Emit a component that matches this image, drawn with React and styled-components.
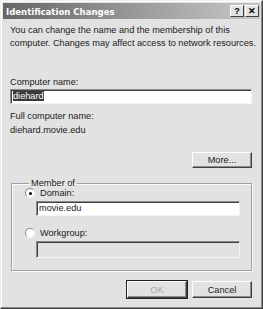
import React from "react";
import styled, { createGlobalStyle } from "styled-components";

const Global = createGlobalStyle`
  html, body { margin: 0; padding: 0; background: #e2e2e2; }
  body { font-family: "Liberation Sans", Arial, sans-serif; font-size: 9.2px; color: #1a1a1a; }
`;

const Window = styled.div`
  width: 263px;
  height: 309px;
  box-sizing: border-box;
  background: #e2e2e2;
  border: 1px solid;
  border-color: #f0f0f0 #404040 #404040 #f0f0f0;
  box-shadow: inset -1px -1px 0 #8a8a8a, inset 1px 1px 0 #ffffff;
  padding: 2px;
  display: flex;
  flex-direction: column;
`;

const TitleBar = styled.div`
  height: 16px;
  display: flex;
  align-items: center;
  padding: 0 1px 0 3px;
  background: linear-gradient(to right, #666666, #c9c9c9);
`;

const Title = styled.div`
  flex: 1;
  color: #ffffff;
  font-family: "DejaVu Sans Condensed", "DejaVu Sans", sans-serif;
  font-weight: bold;
  font-size: 9.5px;
`;

const CaptionButton = styled.div`
  width: 14px;
  height: 12px;
  margin-left: 1px;
  box-sizing: border-box;
  background: #e2e2e2;
  border: 1px solid;
  border-color: #ffffff #404040 #404040 #ffffff;
  display: flex;
  align-items: center;
  justify-content: center;
  font-weight: bold;
  font-size: 9px;
  line-height: 1;
  color: #000;
`;

const Body = styled.div`
  flex: 1;
  display: flex;
  flex-direction: column;
  padding: 0 8px 0 7px;
`;

const Text = styled.div`
  line-height: 13px;
  white-space: nowrap;
  margin-top: ${(p) => p.mt || 0}px;
`;

const Field = styled.div`
  box-sizing: border-box;
  background: ${(p) => (p.disabled ? "#e2e2e2" : "#ffffff")};
  border: 1px solid;
  border-color: #8a8a8a #f4f4f4 #f4f4f4 #8a8a8a;
  box-shadow: inset 1px 1px 0 #404040;
  padding: 1px 2px;
  line-height: 11px;
  margin-top: ${(p) => p.mt || 0}px;
  margin-left: ${(p) => p.ml || 0}px;
  height: ${(p) => p.h || 15}px;
`;

const Selected = styled.span`
  background: #3a3a3a;
  color: #fff;
`;

const ButtonRow = styled.div`
  display: flex;
  justify-content: flex-end;
  gap: 5px;
  margin-top: ${(p) => p.mt || 0}px;
`;

const Button = styled.div`
  width: 60px;
  height: ${(p) => p.h || 17}px;
  box-sizing: border-box;
  border: 1px solid;
  border-color: #ffffff #404040 #404040 #ffffff;
  box-shadow: inset -1px -1px 0 #8a8a8a;
  display: flex;
  align-items: center;
  justify-content: center;
  color: ${(p) => (p.disabled ? "#a8a8a8" : "#1a1a1a")};
  outline: ${(p) => (p.focused ? "1px solid #202020" : "none")};
`;

const Group = styled.fieldset`
  margin: 10px 0 0 1px;
  padding: 0 11px 6px 13px;
  border: 1px solid #a0a0a0;
  box-shadow: 1px 1px 0 #fafafa, inset 1px 1px 0 #fafafa;
  height: 93px;
  box-sizing: border-box;
`;

const Legend = styled.legend`
  padding: 0 2px;
  margin-left: 4px;
  line-height: 10px;
`;

const RadioRow = styled.label`
  display: flex;
  align-items: center;
  gap: 5px;
  margin-top: ${(p) => p.mt || 0}px;
`;

const Radio = styled.span`
  width: 10px;
  height: 10px;
  border-radius: 50%;
  box-sizing: border-box;
  background: #fff;
  border: 1px solid;
  border-color: #8a8a8a #f4f4f4 #f4f4f4 #8a8a8a;
  display: flex;
  align-items: center;
  justify-content: center;
  &::after {
    content: "";
    width: 3px;
    height: 3px;
    border-radius: 50%;
    background: ${(p) => (p.checked ? "#000" : "transparent")};
  }
`;

export default function App() {
  return (
    <>
      <Global />
      <Window>
        <TitleBar>
          <Title>Identification Changes</Title>
          <CaptionButton>?</CaptionButton>
          <CaptionButton>✕</CaptionButton>
        </TitleBar>
        <Body>
          <Text mt={5}>
            You can change the name and the membership of this
            <br />
            computer. Changes may affect access to network resources.
          </Text>
          <Text mt={26}>Computer name:</Text>
          <Field mt={0}>
            <Selected>diehard</Selected>
          </Field>
          <Text mt={6}>Full computer name:</Text>
          <Text mt={1}>diehard.movie.edu</Text>
          <ButtonRow mt={15}>
            <Button h={16}>More...</Button>
          </ButtonRow>
          <Group>
            <Legend>Member of</Legend>
            <RadioRow mt={0}>
              <Radio checked />
              Domain:
            </RadioRow>
            <Field ml={11} mt={3}>movie.edu</Field>
            <RadioRow mt={12}>
              <Radio />
              Workgroup:
            </RadioRow>
            <Field ml={11} mt={3} h={17} disabled />
          </Group>
          <ButtonRow mt={10}>
            <Button disabled focused>OK</Button>
            <Button>Cancel</Button>
          </ButtonRow>
        </Body>
      </Window>
    </>
  );
}
